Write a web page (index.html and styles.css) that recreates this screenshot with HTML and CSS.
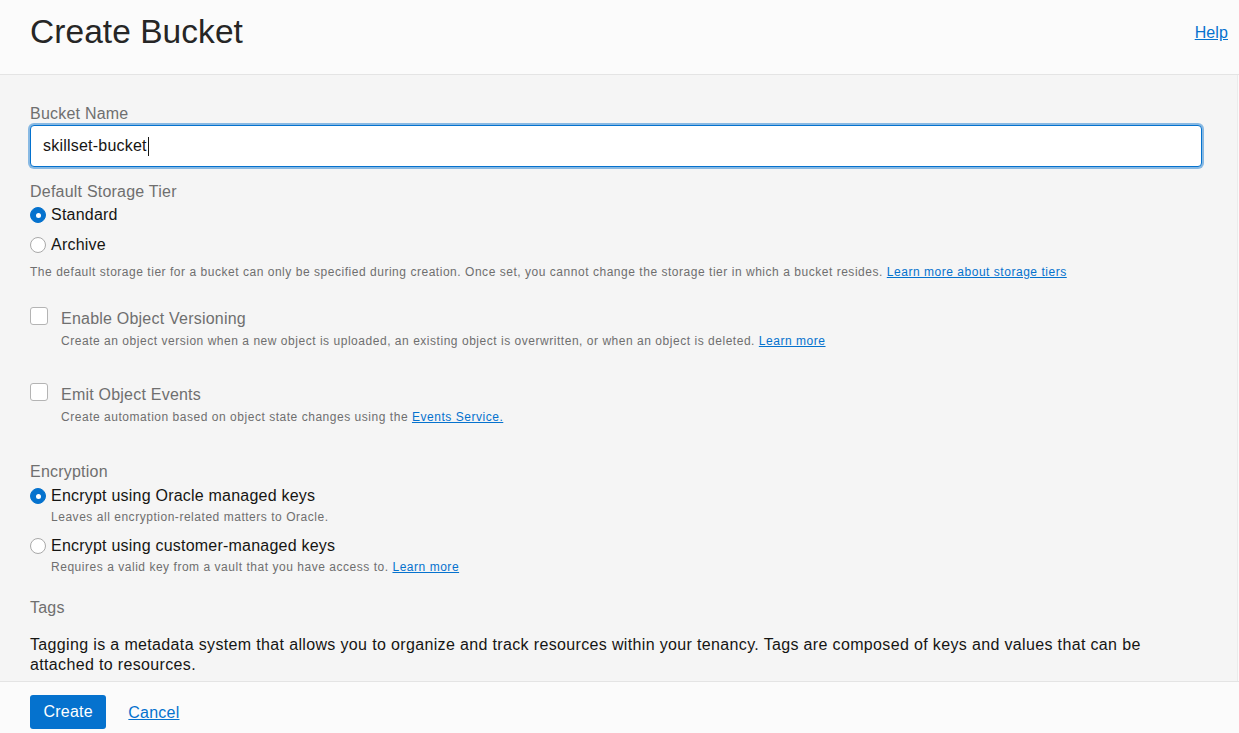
FILE: index.html
```html
<!DOCTYPE html>
<html lang="en">
<head>
<meta charset="utf-8">
<title>Create Bucket</title>
<link rel="stylesheet" href="styles.css">
</head>
<body>
<div class="page">
  <header class="header">
    <h1 class="title">Create Bucket</h1>
    <a class="help-link" href="#">Help</a>
  </header>
  <main class="content">
    <div class="field-label">Bucket Name</div>
    <div class="text-input"><span class="input-value">skillset-bucket</span><span class="caret"></span></div>

    <div class="field-label section-gap-sm">Default Storage Tier</div>
    <div class="radio-row first-row">
      <span class="radio checked"></span><span class="option-text">Standard</span>
    </div>
    <div class="radio-row next-row">
      <span class="radio"></span><span class="option-text">Archive</span>
    </div>
    <p class="help-text tier-help">The default storage tier for a bucket can only be specified during creation. Once set, you cannot change the storage tier in which a bucket resides. <a href="#" class="link">Learn more about storage tiers</a></p>

    <div class="check-block versioning">
      <span class="checkbox"></span>
      <div class="check-body">
        <div class="check-label">Enable Object Versioning</div>
        <p class="help-text check-desc">Create an object version when a new object is uploaded, an existing object is overwritten, or when an object is deleted. <a href="#" class="link">Learn more</a></p>
      </div>
    </div>

    <div class="check-block events">
      <span class="checkbox"></span>
      <div class="check-body">
        <div class="check-label">Emit Object Events</div>
        <p class="help-text check-desc">Create automation based on object state changes using the <a href="#" class="link">Events Service.</a></p>
      </div>
    </div>

    <div class="field-label encryption-label">Encryption</div>
    <div class="radio-row enc-first-row">
      <span class="radio checked"></span><span class="option-text">Encrypt using Oracle managed keys</span>
    </div>
    <p class="help-text radio-desc">Leaves all encryption-related matters to Oracle.</p>
    <div class="radio-row enc-next-row">
      <span class="radio"></span><span class="option-text">Encrypt using customer-managed keys</span>
    </div>
    <p class="help-text radio-desc">Requires a valid key from a vault that you have access to. <a href="#" class="link">Learn more</a></p>

    <div class="field-label tags-label">Tags</div>
    <p class="tags-text">Tagging is a metadata system that allows you to organize and track resources within your tenancy. Tags are composed of keys and values that can be attached to resources.</p>
  </main>
  <footer class="footer">
    <button class="btn-primary" type="button">Create</button>
    <a class="cancel-link" href="#">Cancel</a>
  </footer>
</div>
</body>
</html>
```

FILE: styles.css
```css
* {
  box-sizing: border-box;
}

html, body {
  margin: 0;
  padding: 0;
  height: 100%;
}

body {
  font-family: "Liberation Sans", Arial, sans-serif;
  color: #161513;
  background: #fbfbfb;
  overflow: hidden;
  letter-spacing: 0.22px;
}

.page {
  display: flex;
  flex-direction: column;
  height: 733px;
}

.header {
  flex: 0 0 75px;
  display: flex;
  justify-content: space-between;
  align-items: flex-start;
  padding: 12px 11px 0 30px;
  background: #fbfbfb;
  border-bottom: 1px solid #e4e4e4;
}

.title {
  margin: 0;
  font-size: 33.5px;
  line-height: 40px;
  font-weight: normal;
  letter-spacing: 0.05px;
  color: #262626;
}

.help-link {
  margin-top: 11px;
  font-size: 16px;
  line-height: 20px;
  letter-spacing: 0.1px;
  color: #0572ce;
  text-decoration: underline;
}

.content {
  flex: 1 1 auto;
  overflow: hidden;
  background: #f5f5f5;
  padding: 29px 35px 0 30px;
  border-right: 1px solid #ebebeb;
  margin-right: 1px;
}

.field-label {
  font-size: 16px;
  line-height: 20px;
  color: #6f6f6f;
}

.text-input {
  margin-top: 1px;
  height: 42px;
  display: flex;
  align-items: center;
  padding: 0 12px;
  background: #ffffff;
  border: 1px solid #0572ce;
  border-radius: 4px;
  box-shadow: 0 0 0 2px rgba(5, 114, 206, 0.45);
  font-size: 16px;
  color: #161513;
}

.caret {
  display: inline-block;
  width: 1px;
  height: 19px;
  background: #161513;
  margin-left: 1px;
}

.section-gap-sm {
  margin-top: 15px;
}

.radio-row {
  display: flex;
  align-items: center;
  gap: 5px;
  font-size: 16px;
  line-height: 20px;
  color: #161513;
}

.first-row {
  margin-top: 3px;
}

.next-row {
  margin-top: 10px;
}

.enc-first-row {
  margin-top: 4px;
}

.enc-next-row {
  margin-top: 11px;
}

.radio {
  flex: 0 0 16px;
  width: 16px;
  height: 16px;
  border-radius: 50%;
  background: #ffffff;
  border: 1px solid #a9a9a9;
  display: flex;
  align-items: center;
  justify-content: center;
}

.radio.checked {
  background: #0572ce;
  border-color: #0572ce;
}

.radio.checked::after {
  content: "";
  width: 5px;
  height: 5px;
  border-radius: 50%;
  background: #ffffff;
}

.help-text {
  margin: 0;
  font-size: 12px;
  line-height: 16px;
  letter-spacing: 0.53px;
  color: #6f6f6f;
}

.link {
  color: #0572ce;
  text-decoration: underline;
}

.tier-help {
  margin-top: 9px;
}

.check-block {
  display: flex;
  align-items: flex-start;
  gap: 13px;
}

.versioning {
  margin-top: 29px;
}

.events {
  margin-top: 36px;
}

.checkbox {
  flex: 0 0 18px;
  width: 18px;
  height: 18px;
  margin-top: -2px;
  border: 1px solid #b4b4b4;
  border-radius: 3px;
  background: #ffffff;
}

.check-label {
  font-size: 16px;
  line-height: 20px;
  color: #6f6f6f;
}

.check-desc {
  margin-top: 4px;
}

.radio-desc {
  margin-top: 3px;
  padding-left: 21px;
}

.encryption-label {
  margin-top: 37px;
}

.tags-label {
  margin-top: 23px;
}

.tags-text {
  margin: 17px 0 0;
  font-size: 16px;
  line-height: 20px;
  letter-spacing: 0.35px;
  color: #161513;
}

.footer {
  flex: 0 0 52px;
  display: flex;
  align-items: flex-start;
  gap: 22px;
  padding: 13px 30px 0;
  background: #fbfbfb;
  border-top: 1px solid #e4e4e4;
}

.btn-primary {
  height: 34px;
  padding: 0 13.5px;
  border: none;
  border-radius: 3px;
  background: #0572ce;
  color: #ffffff;
  font-family: "Liberation Sans", Arial, sans-serif;
  font-size: 16px;
  line-height: 20px;
  letter-spacing: 0.22px;
  cursor: pointer;
}

.cancel-link {
  margin-top: 8px;
  font-size: 16px;
  line-height: 20px;
  color: #0572ce;
  text-decoration: underline;
}
```
